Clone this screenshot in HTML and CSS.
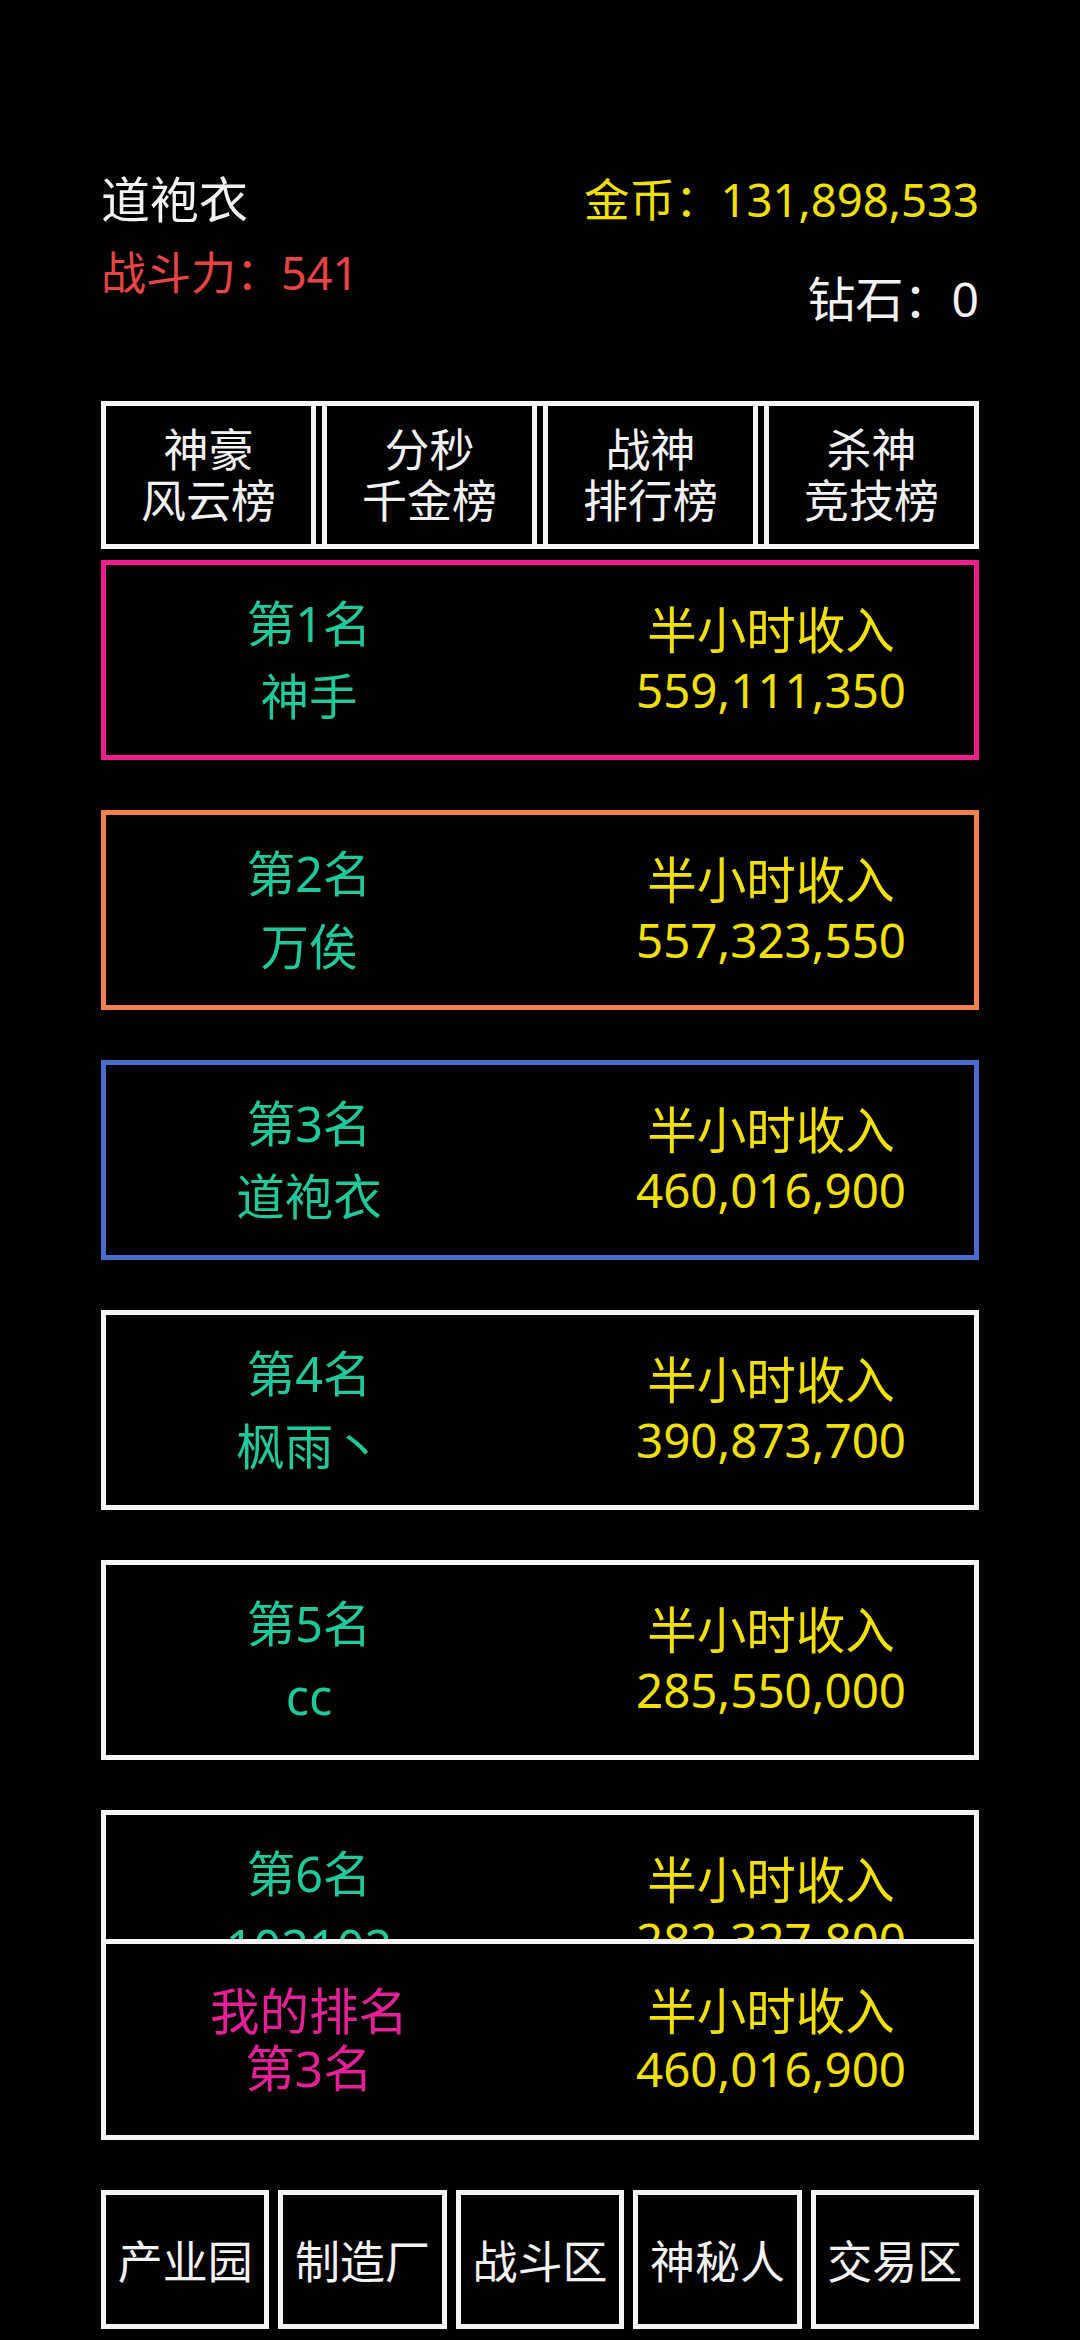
FILE: index.html
```html
<!DOCTYPE html>
<html lang="zh">
<head>
<meta charset="utf-8">
<title>排行榜</title>
<link rel="stylesheet" href="styles.css">
</head>
<body>
<div class="page">
  <header class="info">
    <div class="info-left">
      <div class="name">道袍衣</div>
      <div class="power">战斗力：541</div>
    </div>
    <div class="info-right">
      <div class="gold">金币：131,898,533</div>
      <div class="diamond">钻石：0</div>
    </div>
  </header>

  <nav class="tabs">
    <div class="tab">神豪<br>风云榜</div>
    <div class="tab">分秒<br>千金榜</div>
    <div class="tab">战神<br>排行榜</div>
    <div class="tab">杀神<br>竞技榜</div>
  </nav>

  <div class="list">
    <div class="card card-pink">
      <div class="col rank-col"><div class="green">第1名</div><div class="green">神手</div></div>
      <div class="col income-col"><div>半小时收入</div><div class="num">559,111,350</div></div>
    </div>
    <div class="card card-orange">
      <div class="col rank-col"><div class="green">第2名</div><div class="green">万俟</div></div>
      <div class="col income-col"><div>半小时收入</div><div class="num">557,323,550</div></div>
    </div>
    <div class="card card-blue">
      <div class="col rank-col"><div class="green">第3名</div><div class="green">道袍衣</div></div>
      <div class="col income-col"><div>半小时收入</div><div class="num">460,016,900</div></div>
    </div>
    <div class="card">
      <div class="col rank-col"><div class="green">第4名</div><div class="green">枫雨丶</div></div>
      <div class="col income-col"><div>半小时收入</div><div class="num">390,873,700</div></div>
    </div>
    <div class="card">
      <div class="col rank-col"><div class="green">第5名</div><div class="green">cc</div></div>
      <div class="col income-col"><div>半小时收入</div><div class="num">285,550,000</div></div>
    </div>
    <div class="card">
      <div class="col rank-col"><div class="green">第6名</div><div class="green">102102</div></div>
      <div class="col income-col"><div>半小时收入</div><div class="num">282,327,800</div></div>
    </div>
  </div>

  <div class="card mine">
    <div class="col mine-col"><div>我的排名</div><div>第3名</div></div>
    <div class="col income-col mine-income"><div>半小时收入</div><div class="num">460,016,900</div></div>
  </div>

  <nav class="menu">
    <div class="btn">产业园</div>
    <div class="btn">制造厂</div>
    <div class="btn">战斗区</div>
    <div class="btn">神秘人</div>
    <div class="btn">交易区</div>
  </nav>
</div>
</body>
</html>
```

FILE: styles.css
```css
html, body {
  margin: 0;
  padding: 0;
  background: #000;
}

body {
  font-family: "Noto Sans", "Noto Sans CJK SC", sans-serif;
  color: #f2f2f2;
}

.page {
  width: 878px;
  margin: 0 auto;
  height: 2340px;
  overflow: hidden;
}

/* header info */
.info {
  display: flex;
  justify-content: space-between;
  padding-top: 169px;
}

.name {
  font-size: 49px;
  line-height: 60px;
  color: #f2f2f2;
}

.power {
  font-size: 45px;
  line-height: 60px;
  margin-top: 14px;
  color: #e84444;
}

.info-right {
  text-align: right;
}

.gold {
  font-size: 45.5px;
  line-height: 60px;
  color: #f2e003;
}

.diamond {
  font-size: 48px;
  line-height: 60px;
  margin-top: 40px;
  color: #f2f2f2;
}

/* tabs */
.tabs {
  display: flex;
  gap: 6px;
  box-sizing: border-box;
  height: 148px;
  margin-top: 72px;
  border: 5px solid #f4f4f4;
}

.tab {
  flex: 1;
  display: flex;
  align-items: center;
  justify-content: center;
  text-align: center;
  font-size: 45px;
  line-height: 51px;
  color: #f2f2f2;
}

.tab + .tab {
  border-left: 5px solid #f4f4f4;
}

.tab:not(:last-child) {
  border-right: 5px solid #f4f4f4;
}

/* ranking list */
.list {
  margin-top: 11px;
  height: 1379px;
  overflow: hidden;
}

.card {
  box-sizing: border-box;
  height: 200px;
  margin-bottom: 50px;
  border: 5px solid #f4f4f4;
  display: flex;
  justify-content: space-between;
  align-items: center;
  padding: 0 53px;
}

.card-pink {
  border-color: #ee1e8c;
}

.card-orange {
  border-color: #f2814f;
}

.card-blue {
  border-color: #4a6ccc;
}

.col {
  width: 300px;
  text-align: center;
  font-size: 49.5px;
}

.rank-col {
  font-size: 48.5px;
  line-height: 73px;
}

.green {
  color: #1fc99c;
}

.income-col {
  line-height: 59px;
  color: #f2e003;
}

.num {
  font-size: 47.5px;
}

.mine {
  margin-bottom: 0;
  height: 201px;
}

.mine-col {
  line-height: 57px;
  color: #e41f98;
}

.mine-income {
  line-height: 57px;
}

/* bottom menu */
.menu {
  display: flex;
  gap: 9px;
  margin-top: 50px;
}

.btn {
  flex: 1;
  box-sizing: border-box;
  height: 139px;
  border: 5px solid #f4f4f4;
  display: flex;
  align-items: center;
  justify-content: center;
  font-size: 45px;
  color: #f2f2f2;
}
```
